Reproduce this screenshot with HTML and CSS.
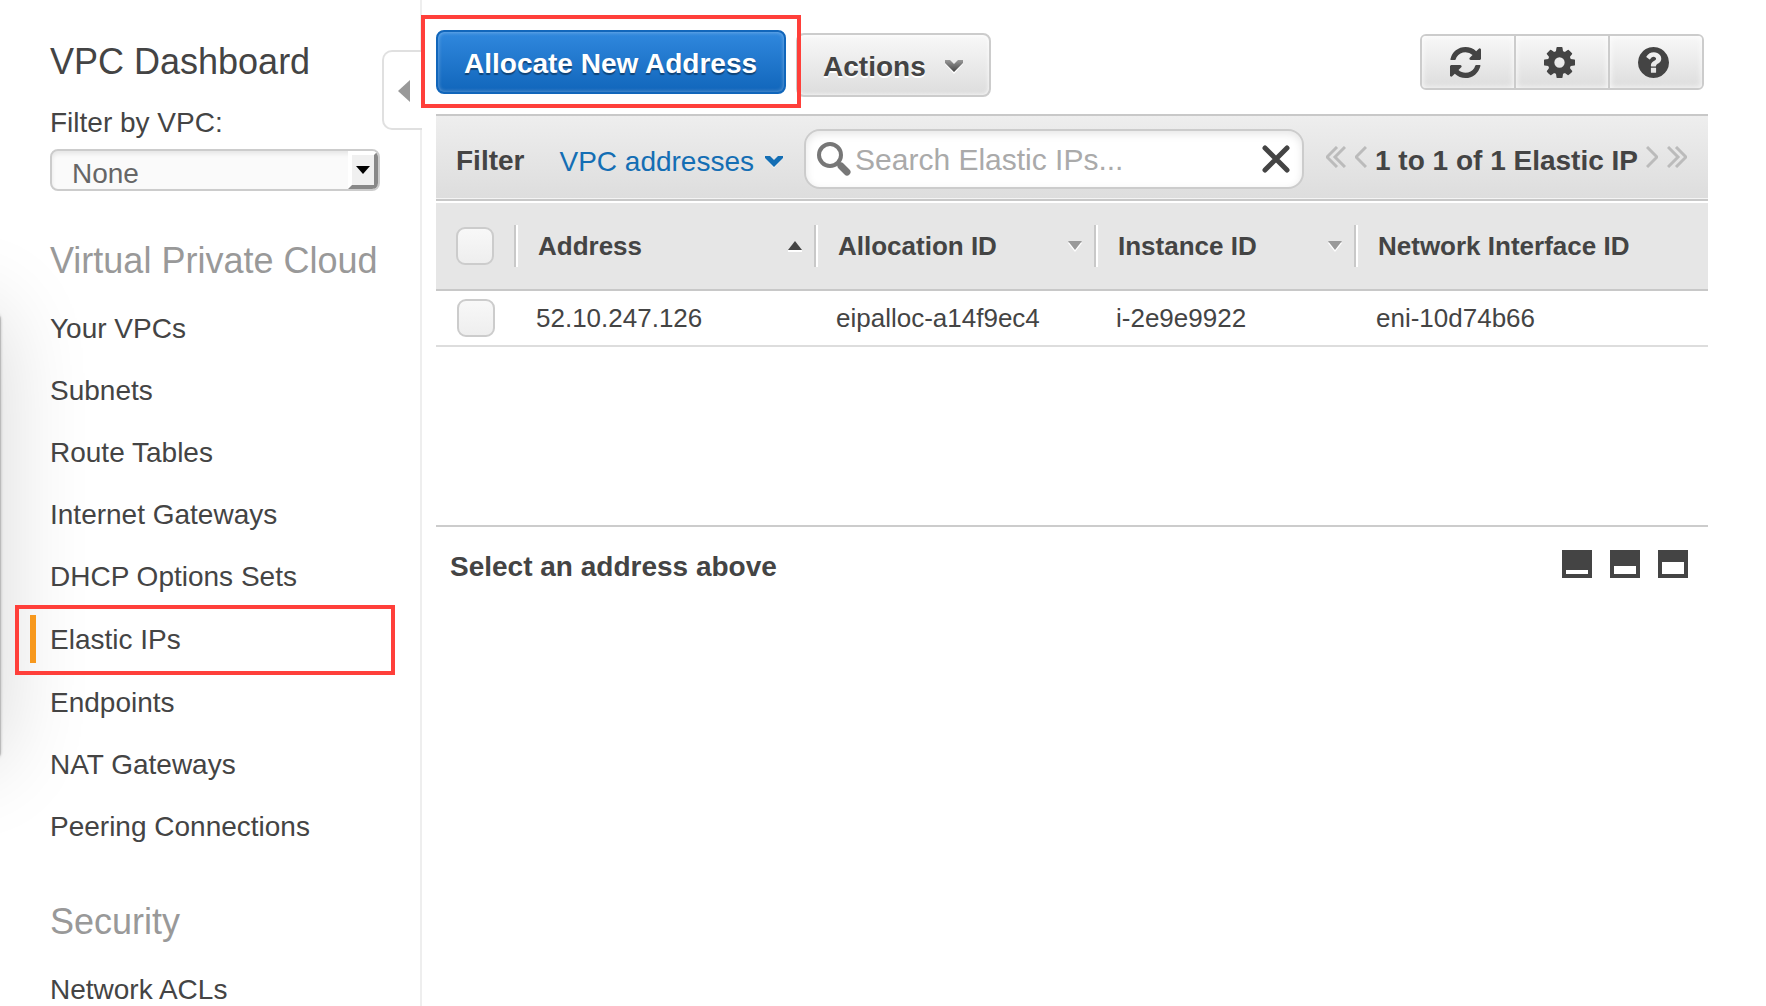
FILE: index.html
```html
<!DOCTYPE html>
<html lang="en">
<head>
<meta charset="utf-8">
<title>VPC Management Console</title>
<link rel="stylesheet" href="styles.css">
</head>
<body>
<div class="app">
  <div class="edge-shadow" aria-hidden="true"></div>

  <aside class="sidebar">
    <button class="collapse" type="button" aria-label="Collapse sidebar">
      <svg width="12" height="22" viewBox="0 0 12 22"><path d="M12 0v22L0 11z" fill="#999"/></svg>
    </button>
    <h1 class="side-title"><a href="#dashboard">VPC Dashboard</a></h1>
    <label class="side-label" for="vpc">Filter by VPC:</label>
    <div class="select-box">
      <select id="vpc"><option>None</option></select>
      <span class="select-arrow"><svg width="14" height="8" viewBox="0 0 14 8"><path d="M0 0h14L7 8z" fill="#000"/></svg></span>
    </div>

    <h2 class="side-heading">Virtual Private Cloud</h2>
    <ul class="nav">
      <li><a href="#vpcs">Your VPCs</a></li>
      <li><a href="#subnets">Subnets</a></li>
      <li><a href="#routes">Route Tables</a></li>
      <li><a href="#igws">Internet Gateways</a></li>
      <li><a href="#dhcp">DHCP Options Sets</a></li>
      <li class="active"><a href="#eips" aria-current="page">Elastic IPs</a></li>
      <li><a href="#endpoints">Endpoints</a></li>
      <li><a href="#nat">NAT Gateways</a></li>
      <li><a href="#peering">Peering Connections</a></li>
    </ul>

    <h2 class="side-heading">Security</h2>
    <ul class="nav">
      <li><a href="#acls">Network ACLs</a></li>
    </ul>
  </aside>

  <main class="main">
    <div class="toolbar">
      <div class="callout">
        <button class="btn btn-primary" type="button">Allocate New Address</button>
      </div>
      <button class="btn btn-default" type="button">Actions
        <svg width="20" height="14" viewBox="0 0 20 14"><path d="M1 1h5l4 4 4-4h5v3l-9 10L1 4z" fill="#fff"/><path d="M1 0h5l4 4 4-4h5v3l-9 9-9-9z" fill="url(#chev)"/><defs><linearGradient id="chev" x2="0" y2="1"><stop offset="0" stop-color="#999"/><stop offset="1" stop-color="#444"/></linearGradient></defs></svg>
      </button>
      <div class="icon-group">
        <button type="button" aria-label="Refresh"><svg width="31" height="31" viewBox="128 128 1536 1536"><path fill="#444" d="M1639 1056q0 5-1 7-64 268-268 434.500t-478 166.500q-146 0-282.500-55t-243.500-157l-129 129q-19 19-45 19t-45-19-19-45v-448q0-26 19-45t45-19h448q26 0 45 19t19 45-19 45l-137 137q71 66 161 102t187 36q134 0 250-65t186-179q11-17 53-117 8-23 30-23h192q13 0 22.500 9.500t9.500 22.500zm25-800v448q0 26-19 45t-45 19h-448q-26 0-45-19t-19-45 19-45l138-138q-148-137-349-137-134 0-250 65t-186 179q-11 17-53 117-8 23-30 23h-199q-13 0-22.500-9.500t-9.500-22.500v-7q65-268 270-434.500t480-166.500q146 0 284 55.500t245 156.500l130-129q19-19 45-19t45 19 19 45z"/></svg></button>
        <button type="button" aria-label="Settings"><svg width="31" height="31" viewBox="128 128 1536 1536"><path fill="#444" d="M1152 896q0-106-75-181t-181-75-181 75-75 181 75 181 181 75 181-75 75-181zm512-109v222q0 12-8 23t-20 13l-185 28q-19 54-39 91 35 50 107 138 10 12 10 25t-9 23q-27 37-99 108t-94 71q-12 0-26-9l-138-108q-44 23-91 38-16 136-29 186-7 28-36 28h-222q-14 0-24.500-8.500t-11.500-21.500l-28-184q-49-16-90-37l-141 107q-10 9-25 9-14 0-25-11-126-114-165-168-7-10-7-23 0-12 8-23 15-21 51-66.500t54-70.500q-27-50-41-99l-183-27q-13-2-21-12.500t-8-23.500v-222q0-12 8-23t19-13l186-28q14-46 39-92-40-57-107-138-10-12-10-24 0-10 9-23 26-36 98.500-107.500t94.500-71.500q13 0 26 10l138 107q44-23 91-38 16-136 29-186 7-28 36-28h222q14 0 24.500 8.500t11.500 21.500l28 184q49 16 90 37l142-107q9-9 24-9 13 0 25 10 129 119 165 170 7 8 7 22 0 12-8 23-15 21-51 66.500t-54 70.500q26 50 41 98l183 28q13 2 21 12.500t8 23.500z"/></svg></button>
        <button type="button" aria-label="Help"><svg width="31" height="31" viewBox="128 128 1536 1536"><path fill="#444" d="M1024 1376v-192q0-14-9-23t-23-9h-192q-14 0-23 9t-9 23v192q0 14 9 23t23 9h192q14 0 23-9t9-23zm256-672q0-88-55.500-163t-138.500-116-170-41q-243 0-371 213-15 24 8 42l132 100q7 6 19 6 16 0 25-12 53-68 86-92 34-24 86-24 48 0 85.500 26t37.500 59q0 38-20 61t-68 45q-63 28-115.500 86.500t-52.500 125.500v36q0 14 9 23t23 9h192q14 0 23-9t9-23q0-19 21.500-49.500t54.500-49.500q32-18 49-28.500t46-35 44.500-48 28-60.500 12.500-81zm384 192q0 209-103 385.500t-279.500 279.500-385.500 103-385.500-103-279.500-279.500-103-385.500 103-385.500 279.500-279.500 385.500-103 385.500 103 279.500 279.500 103 385.500z"/></svg></button>
      </div>
    </div>

    <div class="filter-bar">
      <span class="filter-label">Filter</span>
      <button class="filter-link" type="button">VPC addresses
        <svg width="18" height="12" viewBox="0 0 18 12"><path d="M0 2h5l4 4 4-4h5l-9 10z" fill="#fff"/><path d="M0 0h5l4 4 4-4h5v2l-9 9-9-9z" fill="#146eb4"/></svg>
      </button>
      <div class="search">
        <svg width="36" height="36" viewBox="0 0 36 36" fill="none" stroke="#777"><circle cx="14" cy="14" r="11" stroke-width="4"/><path d="M22 22l3 3" stroke-width="4"/><path d="M25 25l6 6" stroke-width="7" stroke-linecap="round"/></svg>
        <input type="text" placeholder="Search Elastic IPs..." aria-label="Search Elastic IPs">
        <button type="button" aria-label="Clear search"><svg width="28" height="28" viewBox="0 0 28 28"><path d="M3 3l22 22M25 3L3 25" stroke="#444" stroke-width="5" stroke-linecap="round"/></svg></button>
      </div>
      <div class="pager">
        <button type="button" aria-label="First page"><svg width="20" height="22" viewBox="0 0 20 22"><path d="M11 1L1 11l10 10M19 1L9 11l10 10"/></svg></button>
        <button type="button" aria-label="Previous page"><svg width="12" height="22" viewBox="0 0 12 22"><path d="M11 1L1 11l10 10"/></svg></button>
        <span class="pager-text">1 to 1 of 1 Elastic IP</span>
        <button type="button" aria-label="Next page"><svg width="12" height="22" viewBox="0 0 12 22"><path d="M1 1l10 10L1 21"/></svg></button>
        <button type="button" aria-label="Last page"><svg width="20" height="22" viewBox="0 0 20 22"><path d="M1 1l10 10L1 21M9 1l10 10L9 21"/></svg></button>
      </div>
    </div>

    <div class="table-pane">
      <table class="grid">
        <colgroup><col class="c-check"><col class="c-address"><col class="c-alloc"><col class="c-instance"><col></colgroup>
        <thead>
          <tr>
            <th scope="col"><div class="th check"><input type="checkbox" aria-label="Select all"></div></th>
            <th scope="col"><div class="th">Address <svg width="14" height="11" viewBox="0 0 14 11"><path d="M0 9h14v2H0z" fill="#fff"/><path d="M7 0l7 9H0z" fill="#444"/></svg></div></th>
            <th scope="col"><div class="th">Allocation ID <svg width="14" height="11" viewBox="0 0 14 11"><path d="M0 2h14l-7 9z" fill="#fff"/><path d="M0 0h14L7 9z" fill="#999"/></svg></div></th>
            <th scope="col"><div class="th">Instance ID <svg width="14" height="11" viewBox="0 0 14 11"><path d="M0 2h14l-7 9z" fill="#fff"/><path d="M0 0h14L7 9z" fill="#999"/></svg></div></th>
            <th scope="col"><div class="th last">Network Interface ID</div></th>
          </tr>
        </thead>
        <tbody>
          <tr>
            <td><div class="check"><input type="checkbox" aria-label="Select 52.10.247.126"></div></td>
            <td>52.10.247.126</td>
            <td>eipalloc-a14f9ec4</td>
            <td>i-2e9e9922</td>
            <td>eni-10d74b66</td>
          </tr>
        </tbody>
      </table>
    </div>

    <section class="detail">
      <h2>Select an address above</h2>
      <div class="layout-buttons">
        <button type="button" aria-label="Small panel"><svg width="30" height="28" viewBox="0 0 30 28"><path d="M0 0h30v28H0z" fill="#444"/><path d="M4 20h22v4H4z" fill="#fff"/></svg></button>
        <button type="button" aria-label="Medium panel"><svg width="30" height="28" viewBox="0 0 30 28"><path d="M0 0h30v28H0z" fill="#444"/><path d="M4 16h22v8H4z" fill="#fff"/></svg></button>
        <button type="button" aria-label="Large panel"><svg width="30" height="28" viewBox="0 0 30 28"><path d="M0 0h30v28H0z" fill="#444"/><path d="M4 12h22v12H4z" fill="#fff"/></svg></button>
      </div>
    </section>
  </main>
</div>
</body>
</html>
```
FILE: styles.css
```css
* { box-sizing: border-box; }

body {
  margin: 0;
  background: #fff;
  color: #444;
  font: 28px/34px "Liberation Sans", Arial, sans-serif;
}

h1, h2, ul { margin: 0; padding: 0; font-weight: normal; }
ul { list-style: none; }
a { color: inherit; text-decoration: none; }
svg { display: block; flex: none; }

button, input, select {
  margin: 0;
  padding: 0;
  border: 0;
  background: none;
  color: inherit;
  font: inherit;
}

.app {
  position: relative;
  display: flex;
  height: 100vh;
  overflow: hidden;
}

/* shadow cast by the window on the left */
.edge-shadow {
  position: absolute;
  left: -100px;
  top: 312px;
  width: 101px;
  height: 448px;
  border-radius: 8px;
  background: #bbb;
  box-shadow: 0 0 3px rgba(0, 0, 0, .2), 0 0 90px 0 rgba(0, 0, 0, .16);
}

/* ---------- sidebar ---------- */
.sidebar {
  position: relative;
  flex: none;
  width: 422px;
  padding: 40px 40px 0 50px;
  border-right: 2px solid #eee;
}

.side-title, .side-heading { font-size: 36px; line-height: 44px; }
.side-title { margin-bottom: 22px; }
.side-heading { margin-top: 43px; margin-bottom: 14px; color: #999; }
.side-label { display: block; margin-bottom: 9px; }

.collapse {
  position: absolute;
  top: 50px;
  right: -2px;
  display: flex;
  align-items: center;
  width: 40px;
  height: 80px;
  padding: 2px 0 0 14px;
  border: 2px solid #e0e0e0;
  border-right: 0;
  border-radius: 10px 0 0 10px;
  background: #fff;
}

.select-box {
  display: flex;
  position: relative;
  height: 42px;
  margin-bottom: 48px;
  border: 2px solid #ccc;
  border-radius: 8px;
  background: #fafafa;
  box-shadow: inset 0 3px 4px rgba(0, 0, 0, .08);
  overflow: hidden;
}

.select-box select {
  flex: 1;
  appearance: none;
  padding: 6px 0 0 20px;
  color: #666;
  line-height: 34px;
}

.select-arrow {
  position: absolute;
  right: 0;
  top: 0;
  bottom: 0;
  width: 30px;
  display: grid;
  place-items: center;
  border: 4px solid;
  border-color: #fff #888 #888 #fff;
  background: #f0f0f0;
  pointer-events: none;
}

.nav a {
  display: block;
  padding: 15px 0 13px;
}

.nav .active { position: relative; padding: 1px 0; }

.nav .active::before {
  content: "";
  position: absolute;
  left: -20px;
  top: 8px;
  width: 6px;
  height: 48px;
  background: #f7981d;
}

.nav .active::after {
  content: "";
  position: absolute;
  inset: -2px -15px -4px -35px;
  border: 4px solid #ff3f3a;
  pointer-events: none;
}

/* ---------- toolbar ---------- */
.main {
  display: flex;
  flex: 1;
  flex-direction: column;
  min-width: 0;
  padding: 0 58px 0 14px;
}

.toolbar {
  display: flex;
  flex: none;
  align-items: flex-start;
  gap: 10px;
  height: 114px;
  padding: 30px 4px 0 0;
}

.callout { position: relative; z-index: 1; }

.callout::after {
  content: "";
  position: absolute;
  inset: -15px -15px -14px;
  border: 4px solid #ff3f3a;
  pointer-events: none;
}

.btn {
  display: flex;
  align-items: center;
  height: 64px;
  border-radius: 8px;
  font-weight: bold;
}

.btn-primary {
  padding: 4px 27px 0 26px;
  border: 2px solid #1166bb;
  background: linear-gradient(#3088de, #1166bb);
  box-shadow: inset 0 0 4px rgba(255, 255, 255, .4);
  color: #fff;
  text-shadow: 0 2px 1px rgba(0, 0, 0, .4);
}

.btn-default {
  gap: 18px;
  margin-top: 3px;
  padding: 4px 25px 0;
  border: 2px solid #ccc;
  background: linear-gradient(#f8f8f8, #ddd);
  box-shadow: inset 0 0 4px #fff;
  text-shadow: 0 2px 0 #fff;
}

.icon-group {
  display: flex;
  height: 56px;
  margin: 4px 0 0 auto;
  border: 2px solid #ccc;
  border-radius: 6px;
  background: #eee;
  overflow: hidden;
}

.icon-group button {
  display: grid;
  place-items: center;
  width: 94px;
  padding-right: 5px;
  background: linear-gradient(#f8f8f8, #ddd);
  box-shadow: inset 0 0 6px #fff;
}

.icon-group button:first-child { width: 92px; }
.icon-group button + button { border-left: 2px solid #ccc; }

/* ---------- filter bar ---------- */
.filter-bar {
  display: flex;
  flex: none;
  align-items: center;
  height: 87px;
  padding: 3px 21px 0 20px;
  margin-bottom: 2px;
  border: solid #c8c8c8;
  border-width: 2px 0;
  background: linear-gradient(#eee, #ddd);
  box-shadow: inset 0 -1px 0 #f4f4f4;
}

.filter-label { margin-right: 35px; padding-top: 3px; font-weight: bold; }

.filter-link {
  display: flex;
  align-items: center;
  gap: 11px;
  margin-right: 21px;
  padding-top: 6px;
  color: #146eb4;
  white-space: nowrap;
}

.search {
  display: flex;
  flex: 1;
  align-items: center;
  min-width: 0;
  height: 60px;
  padding: 0 12px 0 10px;
  border: 2px solid #ccc;
  border-radius: 16px;
  background: #fff;
  box-shadow: inset 0 3px 8px rgba(0, 0, 0, .1);
}

.search input {
  flex: 1;
  min-width: 0;
  padding: 2px 0 0 3px;
  outline: 0;
  font-size: 30px;
}

.search input::placeholder { color: #aaa; opacity: 1; }

.pager {
  display: flex;
  align-items: center;
  gap: 9px;
  margin-left: 22px;
  font-weight: bold;
  white-space: nowrap;
}

.pager button { padding-bottom: 4px; }
.pager svg { fill: none; stroke: #bbb; stroke-width: 3px; }
.pager-text { margin: 0 -1px; padding-top: 3px; }

/* ---------- table ---------- */
.table-pane { flex: 0 0 32%; overflow: hidden; }

.grid {
  width: 100%;
  table-layout: fixed;
  border-collapse: separate;
  border-spacing: 0;
  font-size: 26px;
}

.c-check { width: 80px; }
.c-address { width: 300px; }
.c-alloc { width: 280px; }
.c-instance { width: 260px; }

.grid th {
  height: 88px;
  padding: 0;
  border-bottom: 2px solid #c8c8c8;
  background-color: transparent;
  text-align: left;
}

.grid thead tr { background: #e6e6e6; }

.th {
  display: flex;
  align-items: center;
  justify-content: space-between;
  height: 42px;
  padding: 0 12px 0 22px;
  border-right: 2px solid #c8c8c8;
  box-shadow: 2px 0 0 #fff;
}

.th.last { border: 0; box-shadow: none; }

.grid td {
  height: 56px;
  padding: 0 0 0 20px;
  border-bottom: 2px solid #ddd;
}

.grid td:first-child { padding-left: 1px; }
.check { display: flex; padding: 0 0 0 20px; }

.check input {
  appearance: none;
  width: 38px;
  height: 38px;
  border: 2px solid #ccc;
  border-radius: 9px;
  background: linear-gradient(#f8f8f8, #eee);
}

/* ---------- detail panel ---------- */
.detail {
  display: flex;
  flex: 1;
  align-items: flex-start;
  justify-content: space-between;
  padding: 23px 20px 0 14px;
  border-top: 2px solid #ccc;
}

.detail h2 { font-size: 28px; font-weight: bold; }
.layout-buttons { display: flex; gap: 18px; }
```
